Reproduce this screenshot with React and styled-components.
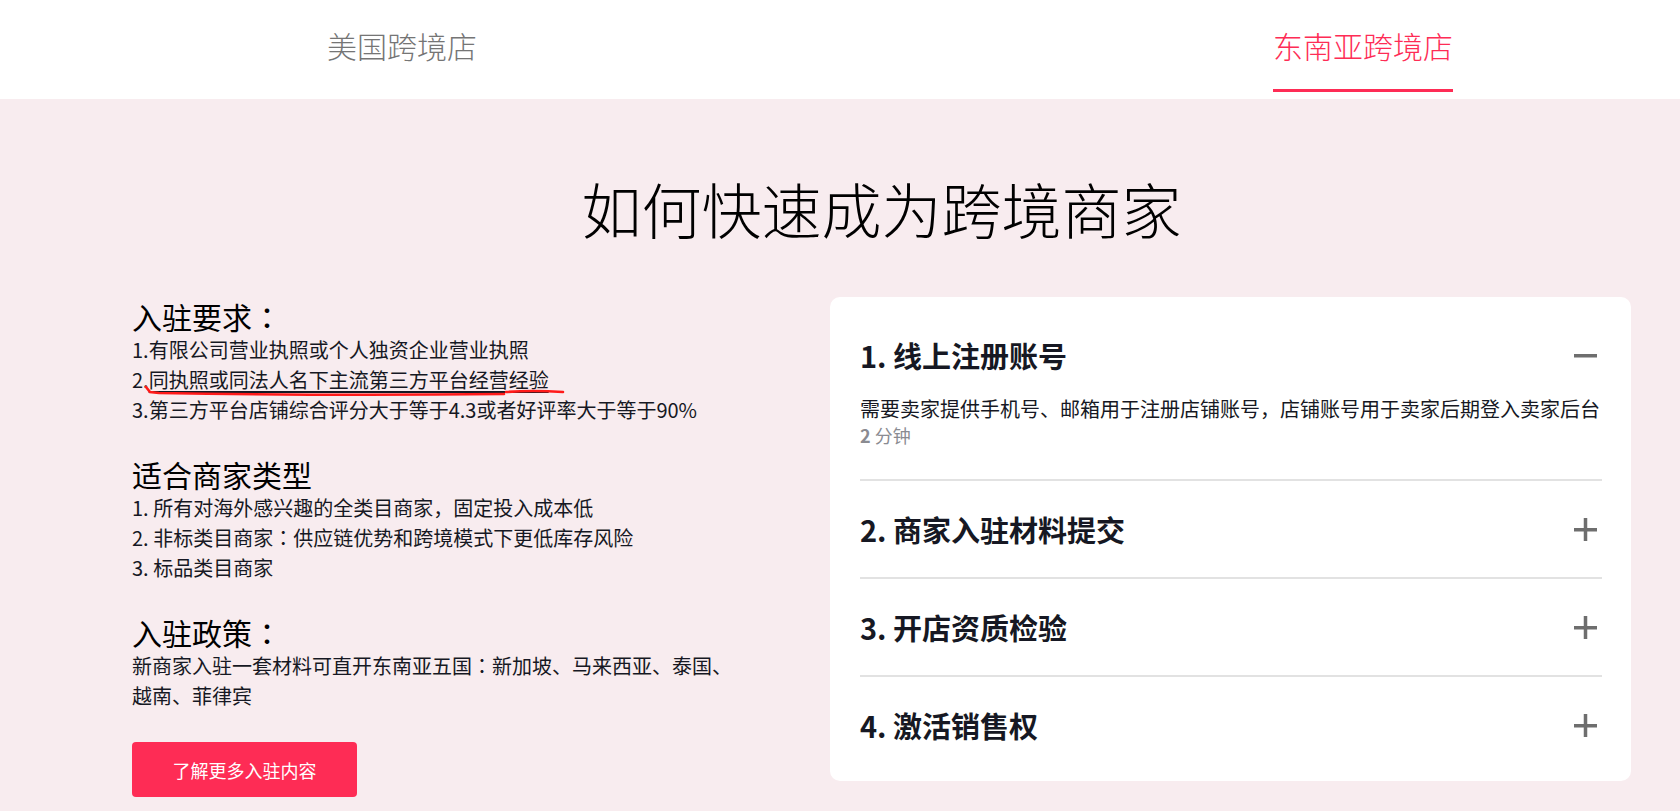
import React, { useState } from 'react'
import styled, { createGlobalStyle } from 'styled-components'

const GlobalStyle = createGlobalStyle`
    html, body {
        margin: 0;
        padding: 0;
        background: #f8ecef;
    }
    body {
        font-family: "Noto Sans CJK SC", "Noto Sans", sans-serif;
        color: #161823;
    }
`;

const Header = styled.div`
    background: #fff;
    height: 99px;
    display: flex;
    align-items: flex-start;
    padding-left: 327px;
    gap: 796px;
    box-sizing: border-box;
`;

const Tab = styled.div`
    padding-top: 27px;
    font-size: 30px;
    line-height: 36px;
    font-weight: 300;
    color: ${({ active }) => (active ? '#fe2c55' : '#757575')};
    cursor: pointer;

    &::after {
        content: '';
        display: block;
        margin-top: 26px;
        height: 3px;
        background: ${({ active }) => (active ? '#fe2c55' : 'transparent')};
    }
`;

const Main = styled.div`
    min-height: 712px;
    padding: 0 49px 0 132px;
`;

const Title = styled.h1`
    margin: 0;
    padding-top: 73px;
    text-align: center;
    font-size: 60px;
    line-height: 72px;
    font-weight: 300;
    color: #000;
`;

const Content = styled.div`
    display: flex;
    justify-content: space-between;
    align-items: flex-start;
    margin-top: 53px;
`;

const LeftCol = styled.div`
    width: 610px;
`;

const Section = styled.div`
    & + & {
        margin-top: 30px;
    }
`;

const Heading = styled.div`
    font-size: 30px;
    line-height: 38px;
    font-weight: 400;
    color: #000;
`;

const Line = styled.div`
    position: relative;
    font-size: 20px;
    line-height: 30px;
    color: #161823;
`;

// centred full-width colon, as in the reference font
const Colon = styled.span`
    font-family: "Noto Sans CJK JP", sans-serif;
`;

const Underlined = styled.span`
    text-decoration: underline;
    text-underline-offset: 3px;
`;

const Scribble = styled.svg`
    position: absolute;
    left: 0;
    top: 0;
    overflow: visible;
    pointer-events: none;
`;

const Button = styled.button`
    margin-top: 31px;
    width: 225px;
    height: 55px;
    border: none;
    border-radius: 4px;
    background: #fe2c55;
    color: #fff;
    font-family: inherit;
    font-size: 18px;
    cursor: pointer;
`;

const Card = styled.div`
    width: 801px;
    box-sizing: border-box;
    background: #fff;
    border-radius: 10px;
    padding: 10px 29px 8px 30px;
`;

const Item = styled.div`
    padding: 30px 0;
    & + & {
        border-top: 2px solid #e2e2e2;
    }
`;

const ItemHead = styled.div`
    display: flex;
    align-items: center;
    justify-content: space-between;
    cursor: pointer;
`;

const ItemTitle = styled.div`
    font-size: 29px;
    line-height: 36px;
    font-weight: 700;
    color: #161823;
`;

const Toggle = styled.svg`
    width: 25px;
    height: 25px;
    margin-right: 4px;
    color: #6e6e6e;
`;

const Desc = styled.div`
    margin-top: 22px;
    font-size: 20px;
    line-height: 27px;
    color: #161823;
    white-space: nowrap;
`;

const Time = styled.div`
    font-size: 18px;
    line-height: 27px;
    color: #8a8b91;

    b {
        font-weight: 700;
    }
`;

const steps = [
    { title: '1. 线上注册账号', desc: '需要卖家提供手机号、邮箱用于注册店铺账号，店铺账号用于卖家后期登入卖家后台', time: '2' },
    { title: '2. 商家入驻材料提交' },
    { title: '3. 开店资质检验' },
    { title: '4. 激活销售权' },
]

function Icon({ open }) {
    return (
        <Toggle viewBox="0 0 25 25">
            <rect x="1" y="11" width="23" height="3.5" fill="currentColor" />
            {!open && <rect x="10.75" y="1" width="3.5" height="23" fill="currentColor" />}
        </Toggle>
    )
}

export default function App() {
    const [tab, setTab] = useState(1)
    const [open, setOpen] = useState(0)

    return (
        <>
            <GlobalStyle />
            <Header>
                <Tab active={tab === 0} onClick={() => setTab(0)}>美国跨境店</Tab>
                <Tab active={tab === 1} onClick={() => setTab(1)}>东南亚跨境店</Tab>
            </Header>
            <Main>
                <Title>如何快速成为跨境商家</Title>
                <Content>
                    <LeftCol>
                        <Section>
                            <Heading>入驻要求<Colon>：</Colon></Heading>
                            <Line>1.有限公司营业执照或个人独资企业营业执照</Line>
                            <Line>
                                2.<Underlined>同执照或同法人名下主流第三方平台经营经验</Underlined>
                                <Scribble width="440" height="32">
                                    <path d="M14 22 L18 27 L27 28 Q200 31 372 29 M374 27 Q400 25 431 27" fill="none" stroke="#ff1a1a" strokeWidth="2.6" strokeLinecap="round" />
                                </Scribble>
                            </Line>
                            <Line>3.第三方平台店铺综合评分大于等于4.3或者好评率大于等于90%</Line>
                        </Section>
                        <Section>
                            <Heading>适合商家类型</Heading>
                            <Line>1. 所有对海外感兴趣的全类目商家，固定投入成本低</Line>
                            <Line>2. 非标类目商家<Colon>：</Colon>供应链优势和跨境模式下更低库存风险</Line>
                            <Line>3. 标品类目商家</Line>
                        </Section>
                        <Section>
                            <Heading>入驻政策<Colon>：</Colon></Heading>
                            <Line>新商家入驻一套材料可直开东南亚五国<Colon>：</Colon>新加坡、马来西亚、泰国、越南、菲律宾</Line>
                        </Section>
                        <Button>了解更多入驻内容</Button>
                    </LeftCol>
                    <Card>
                        {steps.map((s, i) => (
                            <Item key={i}>
                                <ItemHead onClick={() => setOpen(open === i ? -1 : i)}>
                                    <ItemTitle>{s.title}</ItemTitle>
                                    <Icon open={open === i} />
                                </ItemHead>
                                {open === i && s.desc && (
                                    <>
                                        <Desc>{s.desc}</Desc>
                                        <Time><b>{s.time}</b> 分钟</Time>
                                    </>
                                )}
                            </Item>
                        ))}
                    </Card>
                </Content>
            </Main>
        </>
    )
}
